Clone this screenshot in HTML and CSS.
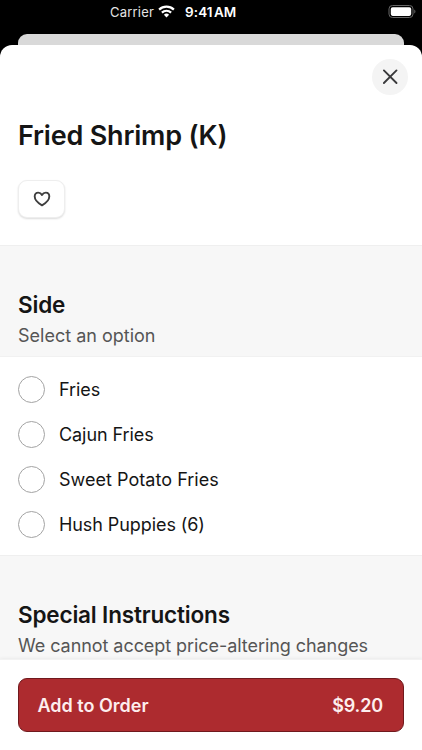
FILE: index.html
```html
<!DOCTYPE html>
<html lang="en">
<head>
<meta charset="utf-8">
<title>Fried Shrimp (K)</title>
<link rel="stylesheet" href="styles.css">
</head>
<body>
<div class="status">
  <span class="carrier">Carrier</span>
  <svg class="wifi" width="17" height="13" viewBox="0 0 17 13" fill="none" stroke="#fff" stroke-width="2.2">
    <path d="M1.1 4.6a10.6 10.6 0 0 1 14.8 0"/>
    <path d="M3.9 7.6a6.6 6.6 0 0 1 9.2 0"/>
    <path d="M8.5 12.6 5.9 9.8a3.8 3.8 0 0 1 5.2 0z" fill="#fff" stroke="none"/>
  </svg>
  <span class="time">9:41 AM</span>
  <svg class="battery" width="28" height="14" viewBox="0 0 28 14">
    <rect x="1" y=".5" width="24" height="12" rx="3.4" fill="none" stroke="#666"/>
    <rect x="2.8" y="2.2" width="20.4" height="8.7" rx="1.8" fill="#fff"/>
    <path d="M26.300 4.600c1.500.5 1.500 3.500 0 4z" fill="#666"/>
  </svg>
</div>
<div class="backdrop"></div>
<main class="sheet">
  <section class="hero">
    <button class="close" aria-label="Close">
      <svg width="16" height="16" viewBox="0 0 16 16" fill="none" stroke="#3a3a3c" stroke-width="1.9" stroke-linecap="round"><path d="M1.900 1.400l12.600 12.600M14.500 1.400 1.900 14"/></svg>
    </button>
    <h1>Fried Shrimp (K)</h1>
    <button class="favorite" aria-label="Favorite">
      <svg width="18" height="16" viewBox="0 0 18 16" fill="none" stroke="#3f3f3f" stroke-width="1.9" stroke-linejoin="round"><path d="M9 14.400C5.200 12.200 1.700 9.200 1.700 5.600c0-2.400 1.500-4 3.500-4C6.900 1.600 8.200 2.500 9 4c.8-1.500 2.100-2.400 3.800-2.400 2 0 3.500 1.600 3.500 4 0 3.600-3.500 6.600-7.300 8.800z"/></svg>
    </button>
  </section>
  <header class="section-head">
    <h2>Side</h2>
    <p>Select an option</p>
  </header>
  <ul class="options">
    <li><span class="radio"></span>Fries</li>
    <li><span class="radio"></span>Cajun Fries</li>
    <li class="wide"><span class="radio"></span>Sweet Potato Fries</li>
    <li><span class="radio"></span>Hush Puppies (6)</li>
  </ul>
  <header class="section-head last">
    <h2>Special Instructions</h2>
    <p class="note">We cannot accept price-altering changes</p>
  </header>
  <footer class="footer">
    <button class="add"><span>Add to Order</span><span class="price">$9.20</span></button>
  </footer>
</main>
</body>
</html>
```
FILE: styles.css
```css
* { box-sizing: border-box; }
body {
  margin: 0;
  width: 422px;
  height: 750px;
  overflow: hidden;
  display: flex;
  flex-direction: column;
  background: #000;
  color: #151515;
  font-family: Inter, "Liberation Sans", sans-serif;
}
h1, h2, p, ul { margin: 0; padding: 0; font-weight: 400; }
button { border: 0; padding: 0; font: inherit; }
svg { display: block; flex: none; }
.status {
  height: 34px;
  padding: 4px 6px 0 110px;
  display: flex;
  align-items: flex-start;
  color: #fff;
  font-size: 13px;
  line-height: 16px;
  white-space: nowrap;
}
.carrier { width: 48px; letter-spacing: .2px; color: #e4e4e4; }
.wifi { margin-top: 1px; }
.time { margin-left: 10px; font-weight: 600; font-size: 13.5px; letter-spacing: .1px; word-spacing: -2.2px; }
.battery { margin: 1px 0 0 auto; }
.backdrop {
  flex: none;
  height: 11px;
  margin: 0 18px;
  background: #d9d9d9;
  border-radius: 9px 9px 0 0;
}
.sheet {
  flex: 1;
  display: flex;
  flex-direction: column;
  background: #fff;
  border-radius: 12px 12px 0 0;
  overflow: hidden;
}
.hero {
  height: 200px;
  padding: 14px 14px 0 18px;
  display: flex;
  flex-direction: column;
  align-items: flex-start;
}
.close {
  width: 36px;
  height: 36px;
  align-self: flex-end;
  border-radius: 50%;
  background: #f4f4f4;
  display: grid;
  place-items: center;
}
.hero h1 {
  margin-top: 24px;
  font-size: 27px;
  line-height: 34px;
  font-weight: 600;
  letter-spacing: -.2px;
  white-space: nowrap;
}
.favorite {
  width: 47px;
  height: 38px;
  margin-top: 27px;
  border: 1px solid #eee;
  border-radius: 9px;
  background: #fff;
  box-shadow: 0 1px 2px rgba(0, 0, 0, .14);
  display: grid;
  place-items: center;
}
.section-head {
  height: 112px;
  padding: 45px 18px 0;
  background: #f7f7f7;
  border-top: 1px solid #efefef;
  border-bottom: 1px solid #f1f1f1;
  white-space: nowrap;
}
.section-head h2 {
  font-size: 22.5px;
  line-height: 28px;
  font-weight: 600;
  letter-spacing: -.17px;
}
.section-head p { margin-top: 4px; font-size: 18px; line-height: 26px; color: #555; }
.section-head .note { letter-spacing: -.06px; }
.options {
  height: 198px;
  padding-top: 10px;
  list-style: none;
}
.options li {
  height: 45px;
  padding-left: 18px;
  display: flex;
  align-items: center;
  gap: 14px;
  font-size: 18px;
  letter-spacing: -.08px;
}
.options .wide { letter-spacing: .03px; }
.radio {
  width: 27px;
  height: 27px;
  border: 1px solid #a3a3a3;
  border-radius: 50%;
}
.last { height: 104px; border-bottom: 0; }
.footer {
  flex: 1;
  padding: 18px 18px 0;
  border-top: 1px solid #f3f3f3;
  background: #fff;
  box-shadow: 0 -1px 3px rgba(0, 0, 0, .05);
}
.add {
  width: 100%;
  height: 54px;
  padding: 0 20px 0 18.5px;
  display: flex;
  align-items: center;
  justify-content: space-between;
  border: 1px solid #70191d;
  border-radius: 9px;
  background: #ad2b2f;
  color: #fdeeee;
  font-size: 18px;
  font-weight: 600;
}
.price { letter-spacing: -.15px; }
```
